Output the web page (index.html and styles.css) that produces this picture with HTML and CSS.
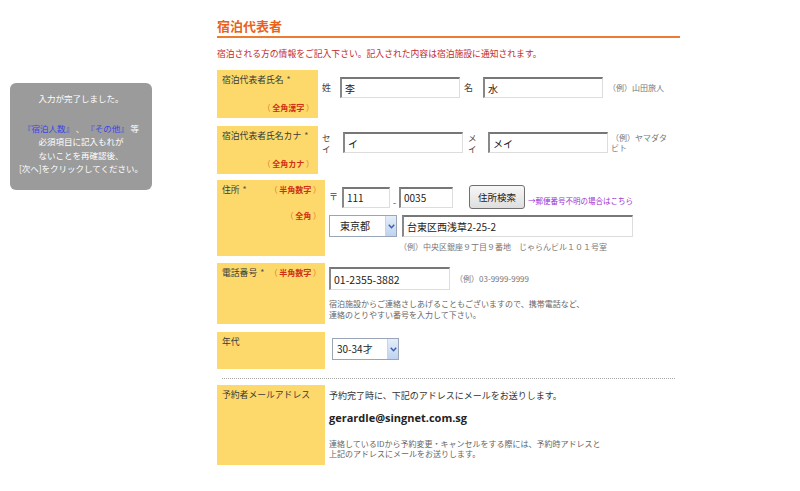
FILE: index.html
```html
<!DOCTYPE html>
<html lang="ja">

<head>
    <meta charset="UTF-8">
    <meta name="viewport" content="width=device-width, initial-scale=1.0">
    <title>宿泊代表者</title>
    <link rel="stylesheet" href="styles.css">
</head>

<body>
    <div class="page">
        <aside class="notice">
            <p>入力が完了しました。</p>
            <p class="notice-body"><span class="blue">『宿泊人数』</span> 、 <span class="blue">『その他』</span> 等<br>必須項目に記入もれが<br>ないことを再確認後、<br>[次へ]をクリックしてください。</p>
        </aside>

        <main class="main">
            <h2 class="heading">宿泊代表者</h2>
            <p class="lead">宿泊される方の情報をご記入下さい。記入された内容は宿泊施設に通知されます。</p>

            <div class="row row-name">
                <div class="label narrow">
                    <div class="label-title">宿泊代表者氏名<span class="req">*</span></div>
                    <div class="label-note">（ <b>全角漢字</b> ）</div>
                </div>
                <div class="field field-narrow">
                    <div class="line">
                        <span class="prefix">姓</span>
                        <input class="text-input w-name" type="text" value="李">
                        <span class="prefix mid">名</span>
                        <input class="text-input w-name" type="text" value="水">
                        <span class="example">（例）山田旅人</span>
                    </div>
                </div>
            </div>

            <div class="row row-kana">
                <div class="label narrow">
                    <div class="label-title">宿泊代表者氏名カナ<span class="req">*</span></div>
                    <div class="label-note">（ <b>全角カナ</b> ）</div>
                </div>
                <div class="field field-narrow">
                    <div class="line">
                        <span class="stack">セ<br>イ</span>
                        <input class="text-input w-name" type="text" value="イ">
                        <span class="stack mid">メ<br>イ</span>
                        <input class="text-input w-name" type="text" value="メイ">
                        <span class="example wrap">（例）ヤマダタ<br>ビト</span>
                    </div>
                </div>
            </div>

            <div class="row row-addr">
                <div class="label">
                    <div class="label-title split">
                        <span>住所<span class="req">*</span></span>
                        <span class="label-note inline">（ <b>半角数字</b> ）</span>
                    </div>
                    <div class="label-note addr-note">（ <b>全角</b> ）</div>
                </div>
                <div class="field">
                    <div class="line zip-line">
                        <span class="prefix zip">〒</span>
                        <input class="text-input w-zip1" type="text" value="111">
                        <span class="dash">-</span>
                        <input class="text-input w-zip2" type="text" value="0035">
                        <button class="btn" type="button">住所検索</button>
                        <a class="zip-link" href="#">→郵便番号不明の場合はこちら</a>
                    </div>
                    <div class="line addr-line">
                        <div class="select w-pref">
                            <span class="select-text center">東京都</span>
                            <span class="select-arrow">
                                <svg width="7" height="5" viewBox="0 0 7 5"><path d="M0.8 0.8 L3.5 3.8 L6.2 0.8" fill="none" stroke="#3a5fa8" stroke-width="1.4"/></svg>
                            </span>
                        </div>
                        <input class="text-input w-addr" type="text" value="台東区西浅草2-25-2">
                    </div>
                    <p class="example addr-example">（例）中央区銀座９丁目９番地　じゃらんビル１０１号室</p>
                </div>
            </div>

            <div class="row row-tel">
                <div class="label">
                    <div class="label-title split">
                        <span>電話番号<span class="req">*</span></span>
                        <span class="label-note inline">（ <b>半角数字</b> ）</span>
                    </div>
                </div>
                <div class="field">
                    <div class="line">
                        <input class="text-input w-tel" type="text" value="01-2355-3882">
                        <span class="example">（例）03-9999-9999</span>
                    </div>
                    <p class="note tel-note">宿泊施設からご連絡さしあげることもございますので、携帯電話など、<br>連絡のとりやすい番号を入力して下さい。</p>
                </div>
            </div>

            <div class="row row-age">
                <div class="label">
                    <div class="label-title">年代</div>
                </div>
                <div class="field">
                    <div class="select w-age">
                        <span class="select-text">30-34才</span>
                        <span class="select-arrow">
                            <svg width="7" height="5" viewBox="0 0 7 5"><path d="M0.8 0.8 L3.5 3.8 L6.2 0.8" fill="none" stroke="#3a5fa8" stroke-width="1.4"/></svg>
                        </span>
                    </div>
                </div>
            </div>

            <hr class="divider">

            <div class="row row-mail">
                <div class="label">
                    <div class="label-title">予約者メールアドレス</div>
                </div>
                <div class="field">
                    <p class="mail-lead">予約完了時に、下記のアドレスにメールをお送りします。</p>
                    <p class="mail-address">gerardle@singnet.com.sg</p>
                    <p class="note mail-note">連絡しているIDから予約変更・キャンセルをする際には、予約時アドレスと<br>上記のアドレスにメールをお送りします。</p>
                </div>
            </div>
        </main>
    </div>
</body>

</html>
```

FILE: styles.css
```css
* {
    margin: 0;
    padding: 0;
    box-sizing: border-box;
    font-family: "Noto Sans CJK JP", "Noto Sans", sans-serif;
}

body {
    background: #fff;
    color: #333;
}

.page {
    display: flex;
    align-items: flex-start;
}

/* left notice */
.notice {
    width: 142px;
    margin: 83px 0 0 10px;
    height: 107px;
    background: #9b9b9b;
    border-radius: 6px;
    color: #fff;
    font-size: 8.5px;
    line-height: 13.5px;
    text-align: center;
    padding-top: 9px;
}

.notice-body {
    margin-top: 16px;
    white-space: pre-line;
}

.notice .blue {
    color: #3b45e6;
}

/* main form */
.main {
    width: 463px;
    margin-left: 65px;
}

.heading {
    margin-top: 18px;
    font-size: 13px;
    line-height: 16px;
    color: #e8621c;
    padding-bottom: 2px;
    border-bottom: 2px solid #ec7b33;
}

.lead {
    margin-top: 10px;
    font-size: 8.8px;
    line-height: 12px;
    color: #c3282a;
}

.row {
    display: flex;
}

.row-name {
    margin-top: 10px;
    min-height: 48px;
}

.row-kana {
    margin-top: 8px;
    min-height: 48px;
}

.row-addr {
    margin-top: 6px;
    min-height: 76px;
}

.row-tel {
    margin-top: 7px;
    min-height: 61px;
}

.row-age {
    margin-top: 8px;
    min-height: 37px;
}

.row-mail {
    margin-top: 6px;
    min-height: 80px;
}

.label {
    width: 108px;
    flex-shrink: 0;
    background: #fdd96b;
    padding: 4px 4px 0 5px;
    font-size: 8.8px;
    line-height: 12px;
    color: #3a3a3a;
    white-space: nowrap;
}

.label.narrow {
    width: 101px;
}

.req {
    color: #555;
    margin-left: 3px;
}

.label-title.split {
    display: flex;
    justify-content: space-between;
}

.label-note {
    text-align: right;
    color: #e2742f;
    font-size: 8px;
    margin-top: 16px;
}

.label-note b {
    color: #cf2f12;
}

.label-note.inline {
    margin-top: 0;
}

.label-note.addr-note {
    margin-top: 14px;
}

.field {
    padding-left: 4px;
    font-size: 9px;
    line-height: 12px;
}

.line {
    display: flex;
    align-items: center;
}

.row-name .field {
    padding-top: 7px;
}

.row-kana .field {
    padding-top: 6px;
}

.row-addr .field {
    padding-top: 5px;
}

.row-tel .field {
    padding-top: 4px;
}

.row-age .field {
    padding-top: 6px;
    padding-left: 7px;
}

.row-mail .field {
    padding-top: 5px;
}

.prefix {
    width: 9px;
    margin-right: 9px;
    font-size: 9px;
    color: #444;
}

.prefix.mid {
    margin-left: 4px;
    margin-right: 10px;
}

.stack {
    width: 9px;
    margin-right: 12px;
    font-size: 8.5px;
    line-height: 10.5px;
    color: #444;
}

.stack.mid {
    margin-left: 5px;
    margin-right: 11px;
}

.text-input {
    height: 21px;
    border: 1px solid #ddd;
    border-top: 2px solid #777;
    border-left: 2px solid #888;
    padding: 0 3px;
    font-size: 10px;
    color: #222;
    background: #fff;
    outline: 0;
}

.w-name {
    width: 120px;
}

.example {
    margin-left: 5px;
    font-size: 8px;
    color: #777;
}

.example.wrap {
    line-height: 10px;
    margin-left: 3px;
}

.prefix.zip {
    margin-left: 0;
    margin-right: 4px;
}

.w-zip1 {
    width: 48px;
}

.dash {
    width: 9px;
    text-align: center;
    align-self: flex-end;
    color: #444;
}

.w-zip2 {
    width: 54px;
}

.btn {
    width: 56px;
    height: 24px;
    margin-left: 16px;
    border: 1px solid #707070;
    border-radius: 3px;
    background: linear-gradient(#f7f7f7, #dedede);
    font-size: 9.5px;
    color: #222;
}

.zip-link {
    margin: 7px 0 0 3px;
    font-size: 7.5px;
    color: #a02fd0;
    text-decoration: none;
}

.addr-line {
    margin-top: 6px;
}

.select {
    display: flex;
    height: 22px;
    border: 1px solid #9aa6b8;
    background: #fff;
    font-size: 10px;
    color: #222;
}

.select-text {
    flex: 1;
    padding-left: 4px;
    line-height: 20px;
}

.select-text.center {
    padding-left: 10px;
}

.select-arrow {
    width: 11px;
    display: flex;
    align-items: center;
    justify-content: center;
    background: linear-gradient(#e4eefb, #bed3f0);
    border-left: 1px solid #c7d5ea;
}

.w-pref {
    width: 68px;
}

.w-addr {
    width: 231px;
    height: 22px;
    margin-left: 5px;
}

.addr-example {
    margin: 4px 0 0 70px;
}

.w-tel {
    width: 121px;
    height: 23px;
    font-size: 10.5px;
}

.note {
    font-size: 8px;
    line-height: 11px;
    color: #666;
}

.tel-note {
    margin-top: 8px;
}

.w-age {
    width: 67px;
}

.divider {
    margin: 9px 5px 0 5px;
    border: 0;
    border-top: 1px dotted #aaa;
}

.mail-lead {
    font-size: 9px;
    line-height: 12px;
    color: #333;
}

.mail-address {
    margin-top: 9px;
    font-family: "Open Sans", "Noto Sans", sans-serif;
    font-weight: bold;
    font-size: 11px;
    line-height: 14px;
    color: #222;
}

.mail-note {
    margin-top: 14px;
    line-height: 10px;
}
```
